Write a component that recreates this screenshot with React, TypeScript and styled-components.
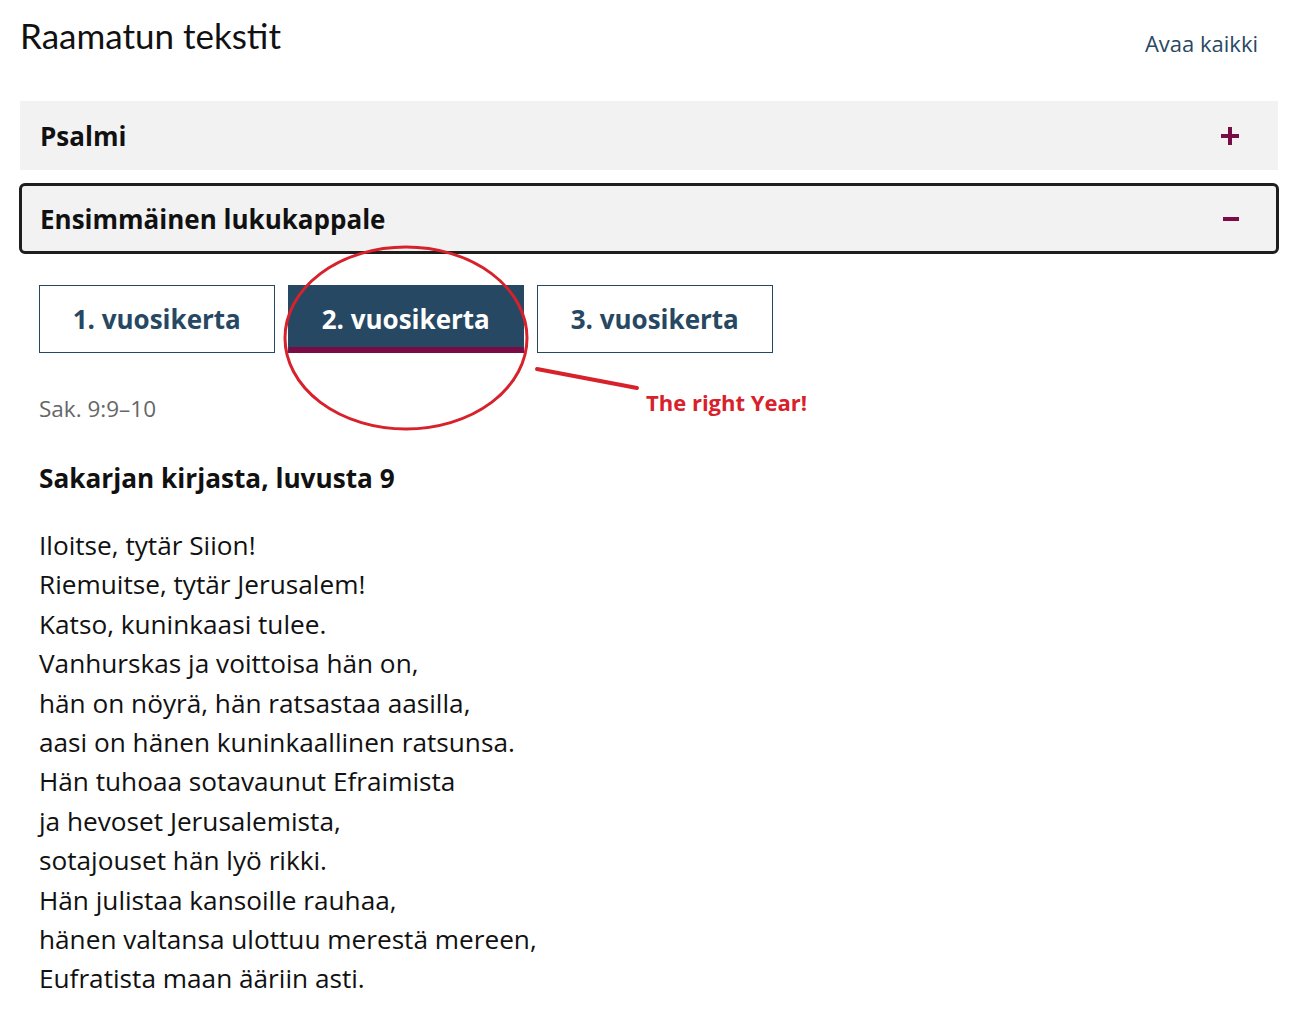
import styled, { createGlobalStyle } from "styled-components";

const GlobalStyle = createGlobalStyle`
  body {
    margin: 0;
    background: #ffffff;
    font-family: "Open Sans", "Liberation Sans", sans-serif;
    color: #111111;
  }
`;

const years = ["1. vuosikerta", "2. vuosikerta", "3. vuosikerta"];

const lines = [
  "Iloitse, tytär Siion!",
  "Riemuitse, tytär Jerusalem!",
  "Katso, kuninkaasi tulee.",
  "Vanhurskas ja voittoisa hän on,",
  "hän on nöyrä, hän ratsastaa aasilla,",
  "aasi on hänen kuninkaallinen ratsunsa.",
  "Hän tuhoaa sotavaunut Efraimista",
  "ja hevoset Jerusalemista,",
  "sotajouset hän lyö rikki.",
  "Hän julistaa kansoille rauhaa,",
  "hänen valtansa ulottuu merestä mereen,",
  "Eufratista maan ääriin asti.",
];

export default function App() {
  const active = 1;
  return (
    <>
      <GlobalStyle />
      <Page>
        <Header>
          <Title>Raamatun tekstit</Title>
          <OpenAll>Avaa kaikki</OpenAll>
        </Header>

        <Section>
          <SectionTitle>Psalmi</SectionTitle>
          <Toggle>
            <svg width="18" height="18" viewBox="0 0 18 18">
              <rect x="0" y="7" width="18" height="4" fill="#7b0b47" />
              <rect x="7" y="0" width="4" height="18" fill="#7b0b47" />
            </svg>
          </Toggle>
        </Section>

        <Section $open>
          <SectionTitle>Ensimmäinen lukukappale</SectionTitle>
          <Toggle>
            <svg width="16" height="18" viewBox="0 0 16 18">
              <rect x="0" y="7" width="16" height="4" fill="#7b0b47" />
            </svg>
          </Toggle>
        </Section>

        <Content>
          <Tabs>
            {years.map((y, i) => (
              <Tab key={y} $active={i === active}>
                {y}
              </Tab>
            ))}
            <Annotation width="560" height="200" viewBox="0 0 560 200">
              <ellipse
                cx="367"
                cy="84"
                rx="121"
                ry="91"
                fill="none"
                stroke="#d7222c"
                strokeWidth="3"
              />
              <path
                d="M498 115 L598 134"
                stroke="#d7222c"
                strokeWidth="4"
                strokeLinecap="round"
              />
            </Annotation>
            <Note>The right Year!</Note>
          </Tabs>

          <Reference>Sak. 9:9–10</Reference>
          <Heading>Sakarjan kirjasta, luvusta 9</Heading>
          <Poem>
            {lines.map((l) => (
              <Line key={l}>{l}</Line>
            ))}
          </Poem>
        </Content>
      </Page>
    </>
  );
}

const Page = styled.div`
  padding: 0 30px 40px 20px;
`;

const Header = styled.div`
  display: flex;
  justify-content: space-between;
  align-items: flex-start;
  height: 101px;
  padding-right: 20px;
`;

const Title = styled.h1`
  margin: 13px 0 0 0;
  font-family: Lato, "Open Sans", sans-serif;
  font-weight: 400;
  font-size: 35px;
  line-height: 44px;
  color: #111111;
`;

const OpenAll = styled.a`
  margin-top: 28px;
  font-size: 22px;
  line-height: 30px;
  color: #2a4863;
  cursor: pointer;
`;

const Section = styled.div<{ $open?: boolean }>`
  display: flex;
  align-items: center;
  justify-content: space-between;
  box-sizing: border-box;
  height: ${(p) => (p.$open ? "71px" : "69px")};
  margin: ${(p) => (p.$open ? "0 -1px" : "0 0 13px")};
  padding: 0 ${(p) => (p.$open ? "37px" : "39px")} 0
    ${(p) => (p.$open ? "18px" : "20px")};
  background: #f2f2f2;
  border: ${(p) => (p.$open ? "3px solid #1e1e1e" : "none")};
  border-radius: ${(p) => (p.$open ? "6px" : "0")};
`;

const SectionTitle = styled.div`
  font-size: 26px;
  font-weight: 700;
  color: #111111;
`;

const Toggle = styled.div`
  display: flex;
  align-items: center;
`;

const Content = styled.div`
  padding: 31px 0 0 19px;
`;

const Tabs = styled.div`
  position: relative;
  display: flex;
  gap: 13.5px;
`;

const Tab = styled.div<{ $active?: boolean }>`
  box-sizing: border-box;
  width: 235.5px;
  height: 68px;
  display: flex;
  align-items: center;
  justify-content: center;
  font-size: 26px;
  font-weight: 700;
  color: ${(p) => (p.$active ? "#ffffff" : "#264862")};
  background: ${(p) => (p.$active ? "#264862" : "#ffffff")};
  border: 1px solid #264862;
  border-bottom: ${(p) => (p.$active ? "6px solid #7b0b47" : "1px solid #264862")};
  padding-top: ${(p) => (p.$active ? "5px" : "0")};
  cursor: pointer;
`;

const Annotation = styled.svg`
  position: absolute;
  left: 0;
  top: -31px;
  pointer-events: none;
  overflow: visible;
`;

const Note = styled.div`
  position: absolute;
  left: 607px;
  top: 102px;
  font-size: 22px;
  font-weight: 700;
  color: #d7222c;
`;

const Reference = styled.div`
  margin-top: 41px;
  font-size: 22.5px;
  line-height: 30px;
  color: #666666;
`;

const Heading = styled.h2`
  margin: 38px 0 0;
  font-size: 26.2px;
  line-height: 32px;
  font-weight: 700;
  color: #111111;
`;

const Poem = styled.div`
  margin-top: 32px;
`;

const Line = styled.div`
  font-size: 26.2px;
  line-height: 39.4px;
  color: #111111;
`;
